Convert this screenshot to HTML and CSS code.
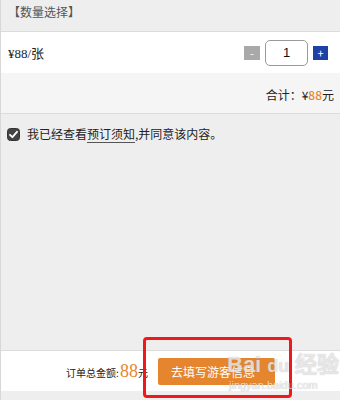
FILE: index.html
```html
<!DOCTYPE html>
<html lang="zh-CN">
<head>
<meta charset="utf-8">
<title>数量选择</title>
<link rel="stylesheet" href="styles.css">
</head>
<body>
<div class="page">
  <div class="section-title">【数量选择】</div>
  <div class="qty-row">
    <span class="price">¥88/张</span>
    <div class="stepper">
      <span class="btn minus">-</span>
      <span class="qty-input">1</span>
      <span class="btn plus">+</span>
    </div>
  </div>
  <div class="total-row">合计：¥<span class="orange">88</span>元</div>
  <div class="agree">
    <svg class="checkbox" width="13" height="13" viewBox="0 0 13 13">
      <rect x="0.5" y="0.5" width="12" height="12" rx="3" fill="#444" stroke="#333"/>
      <path d="M3 6.8 L5.4 9.2 L10 3.8" fill="none" stroke="#fff" stroke-width="1.8" stroke-linecap="round" stroke-linejoin="round"/>
    </svg>
    <span>我已经查看<span class="link">预订须知</span>,并同意该内容。</span>
  </div>
  <div class="spacer"></div>
  <div class="footer">
    <span class="sum">订单总金额:<span class="sum-num">88</span>元</span>
    <span class="submit">去填写游客信息</span>
  </div>
  <div class="highlight"></div>
  <div class="watermark">
    <div class="wm-top">Bai<span class="wm-du">du</span> 经验</div>
    <div class="wm-bottom">jingyan.baidu.com</div>
  </div>
</div>
</body>
</html>
```

FILE: styles.css
```css
* { box-sizing: border-box; }
html, body {
  margin: 0;
  padding: 0;
}
body {
  background: #eeeeee;
  font-family: "Noto Sans CJK SC", "Noto Sans", sans-serif;
  font-size: 12px;
  color: #222;
}
.page {
  position: relative;
  width: 340px;
  height: 400px;
  display: flex;
  flex-direction: column;
  border-left: 1px solid #d8d8d8;
  overflow: hidden;
}
.section-title {
  height: 32px;
  padding: 3px 0 0 7px;
  line-height: 18px;
  color: #555;
  border-bottom: 1px solid #dcdcdc;
}
.qty-row {
  height: 41px;
  background: #fff;
  display: flex;
  align-items: center;
  justify-content: space-between;
  padding: 0 12px 0 7px;
}
.price {
  font-family: "Liberation Serif", "Noto Sans CJK SC", serif;
  font-size: 13px;
  color: #222;
}
.stepper {
  display: flex;
  align-items: center;
  gap: 5px;
}
.btn {
  width: 16px;
  height: 14px;
  color: #fff;
  font-size: 11px;
  line-height: 14px;
  text-align: center;
}
.minus { background: #a9a9a9; }
.plus { background: #1f40a6; width: 15px; }
.qty-input {
  width: 43px;
  height: 26px;
  border: 1px solid #9a9a9a;
  border-radius: 5px;
  background: #fff;
  text-align: center;
  line-height: 24px;
  font-size: 13px;
  font-family: "Liberation Sans", sans-serif;
  color: #111;
}
.total-row {
  height: 41px;
  background: #f5f5f5;
  border-bottom: 1px solid #dcdcdc;
  text-align: right;
  padding: 14px 6px 0 0;
  line-height: 16px;
  color: #222;
}
.orange { color: #e8852c; font-weight: 500; }
.agree {
  display: flex;
  align-items: center;
  gap: 7px;
  padding: 12px 0 0 6px;
  line-height: 16px;
  color: #222;
}
.checkbox { flex: none; }
.link {
  border-bottom: 1px solid #555;
}
.spacer { flex: 1; }
.footer {
  height: 41px;
  margin-bottom: 9px;
  background: #fff;
  border-top: 1px solid #dcdcdc;
  display: flex;
  align-items: center;
  justify-content: center;
  gap: 10px;
}
.sum {
  font-size: 10px;
  color: #222;
  display: flex;
  align-items: baseline;
}
.sum-num {
  font-family: "Liberation Serif", serif;
  font-size: 18px;
  color: #e8852c;
  margin-left: 1px;
}
.submit {
  width: 117px;
  height: 27px;
  background: #e5862f;
  border-radius: 2px;
  color: #fff;
  font-size: 12px;
  line-height: 27px;
  padding-left: 13px;
}
.highlight {
  position: absolute;
  left: 142px;
  top: 337px;
  width: 149px;
  height: 61px;
  border: 3px solid #f01818;
  border-radius: 4px;
}
.watermark {
  position: absolute;
  left: 226px;
  top: 352px;
  color: rgba(255, 255, 255, 0.7);
  text-shadow: 0 0 1px rgba(120, 120, 120, 0.6);
  font-family: "Liberation Sans", sans-serif;
}
.wm-top {
  font-size: 22px;
  font-weight: bold;
  line-height: 26px;
}
.wm-du { font-size: 18px; margin-left: 6px; }
.wm-bottom {
  font-size: 11px;
  line-height: 13px;
  margin-left: 2px;
}
```
